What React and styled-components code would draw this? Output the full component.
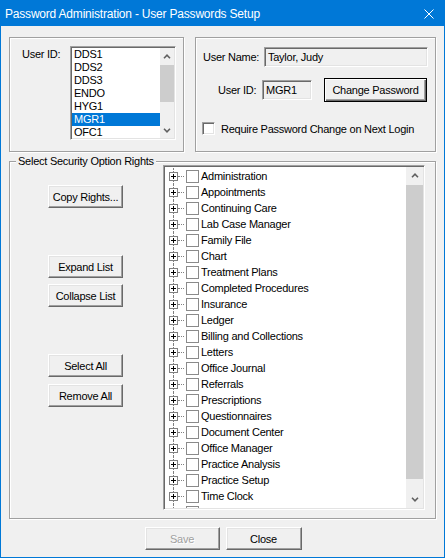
import styled, { createGlobalStyle } from "styled-components";

const users = ["DDS1", "DDS2", "DDS3", "ENDO", "HYG1", "MGR1", "OFC1", "OFC2"];

const rights = [
  "Administration",
  "Appointments",
  "Continuing Care",
  "Lab Case Manager",
  "Family File",
  "Chart",
  "Treatment Plans",
  "Completed Procedures",
  "Insurance",
  "Ledger",
  "Billing and Collections",
  "Letters",
  "Office Journal",
  "Referrals",
  "Prescriptions",
  "Questionnaires",
  "Document Center",
  "Office Manager",
  "Practice Analysis",
  "Practice Setup",
  "Time Clock",
  "Health History",
];

const Chevron = ({ down }) => (
  <svg width="8" height="5" viewBox="0 0 8 5">
    <polyline
      points={down ? "1,0.8 4,3.8 7,0.8" : "1,4.2 4,1.2 7,4.2"}
      fill="none"
      stroke="#606060"
      strokeWidth="1.6"
    />
  </svg>
);

const Plus = () => (
  <svg width="9" height="9" viewBox="0 0 9 9">
    <rect x="0.5" y="0.5" width="8" height="8" fill="#fff" stroke="#808080" />
    <path d="M2 4.5h5M4.5 2v5" stroke="#000" />
  </svg>
);

const ScrollBar = ({ width, arrow, thumbTop, thumbHeight }) => (
  <Scroll $w={width}>
    <ArrowCell $h={arrow}>
      <Chevron />
    </ArrowCell>
    <Track>
      <Thumb $top={thumbTop} $h={thumbHeight} />
    </Track>
    <ArrowCell $h={arrow}>
      <Chevron down />
    </ArrowCell>
  </Scroll>
);

const App = () => {
  return (
    <>
      <GlobalStyle />
      <Window>
        <TitleBar>
          <Title>Password Administration - User Passwords Setup</Title>
          <svg width="10" height="10" viewBox="0 0 10 10" style={{ marginRight: 10 }}>
            <path d="M0.5 0.5L9.5 9.5M9.5 0.5L0.5 9.5" stroke="#fff" strokeWidth="1" />
          </svg>
        </TitleBar>

        <Body>
          <TopRow>
            <UserGroup>
              <ListLabel>User ID:</ListLabel>
              <ListBox>
                <Items>
                  {users.map((u) => (
                    <Item key={u} $selected={u === "MGR1"}>
                      {u}
                    </Item>
                  ))}
                </Items>
                <ScrollBar width={14} arrow={16} thumbTop={1} thumbHeight={37} />
              </ListBox>
            </UserGroup>

            <InfoGroup>
              <FieldRow>
                <FieldLabel $w={61}>User Name:</FieldLabel>
                <Field $w={164}>Taylor, Judy</Field>
              </FieldRow>
              <FieldRow $top={11} $indent={15} $h={24}>
                <FieldLabel $w={44}>User ID:</FieldLabel>
                <Field $w={50}>MGR1</Field>
                <Button $w={103} $default style={{ marginLeft: 12 }}>
                  Change Password
                </Button>
              </FieldRow>
              <FieldRow $top={20} $indent={-1} $h={13}>
                <SunkenCheck />
                <CheckText>Require Password Change on Next Login</CheckText>
              </FieldRow>
            </InfoGroup>
          </TopRow>

          <RightsGroup>
            <Legend>Select Security Option Rights</Legend>
            <ButtonColumn>
              <Button $w={75}>Copy Rights...</Button>
              <Button $w={75} $top={47}>Expand List</Button>
              <Button $w={75} $top={6}>Collapse List</Button>
              <Button $w={75} $top={47}>Select All</Button>
              <Button $w={75} $top={7}>Remove All</Button>
            </ButtonColumn>
            <Tree>
              <TreeList>
                {rights.map((r) => (
                  <TreeRow key={r}>
                    <Branch>
                      <Plus />
                    </Branch>
                    <TreeCheck />
                    <TreeText>{r}</TreeText>
                  </TreeRow>
                ))}
              </TreeList>
              <ScrollBar width={17} arrow={17} thumbTop={1} thumbHeight={294} />
            </Tree>
          </RightsGroup>

          <Footer>
            <Button $w={75} disabled>
              Save
            </Button>
            <Button $w={76}>Close</Button>
          </Footer>
        </Body>
      </Window>
    </>
  );
};

// styled components

const GlobalStyle = createGlobalStyle`
  body {
    margin: 0;
    background: #f0f0f0;
    font-family: "Liberation Sans", Arial, sans-serif;
    font-size: 11px;
    letter-spacing: -0.25px;
    color: #000;
  }
`;

const Window = styled.div`
  box-sizing: border-box;
  width: 445px;
  height: 558px;
  border: 1px solid #0078d7;
  background: #f0f0f0;
  display: flex;
  flex-direction: column;
`;

const TitleBar = styled.div`
  height: 25px;
  flex-shrink: 0;
  background: #0078d7;
  display: flex;
  align-items: center;
  justify-content: space-between;
  padding-left: 4px;
`;

const Title = styled.span`
  color: #fff;
  font-size: 12px;
  letter-spacing: -0.2px;
`;

const Body = styled.div`
  display: flex;
  flex-direction: column;
  padding: 11px 8px 0 8px;
`;

const TopRow = styled.div`
  display: flex;
  gap: 11px;
  height: 115px;
`;

const GroupBox = styled.div`
  box-sizing: border-box;
  border: 1px solid #a0a0a0;
  box-shadow: 1px 1px 0 #fff, inset 1px 1px 0 #fff;
`;

const UserGroup = styled(GroupBox)`
  width: 175px;
  display: flex;
  align-items: flex-start;
  padding: 8px 0 0 12px;
`;

const ListLabel = styled.span`
  width: 48px;
  margin-top: 2px;
  line-height: 13px;
`;

const Sunken = styled.div`
  box-sizing: border-box;
  border: 1px solid;
  border-color: #a0a0a0 #fff #fff #a0a0a0;
  box-shadow: inset 1px 1px 0 #696969, inset -1px -1px 0 #e3e3e3;
`;

const ListBox = styled(Sunken)`
  width: 106px;
  height: 94px;
  padding: 1px;
  background: #fff;
  display: flex;
`;

const Items = styled.div`
  flex: 1;
  overflow: hidden;
`;

const Item = styled.div`
  height: 13px;
  line-height: 13px;
  padding-left: 2px;
  background: ${(p) => (p.$selected ? "#0078d7" : "transparent")};
  color: ${(p) => (p.$selected ? "#fff" : "#000")};
`;

const Scroll = styled.div`
  width: ${(p) => p.$w}px;
  flex-shrink: 0;
  background: #f0f0f0;
  display: flex;
  flex-direction: column;
`;

const ArrowCell = styled.div`
  height: ${(p) => p.$h}px;
  flex-shrink: 0;
  display: flex;
  align-items: center;
  justify-content: center;
`;

const Track = styled.div`
  flex: 1;
`;

const Thumb = styled.div`
  margin-top: ${(p) => p.$top}px;
  height: ${(p) => p.$h}px;
  background: #cdcdcd;
`;

const InfoGroup = styled(GroupBox)`
  flex: 1;
  display: flex;
  flex-direction: column;
  padding: 9px 0 0 7px;
`;

const FieldRow = styled.div`
  display: flex;
  align-items: center;
  height: ${(p) => p.$h || 20}px;
  margin-top: ${(p) => p.$top || 0}px;
  margin-left: ${(p) => p.$indent || 0}px;
`;

const FieldLabel = styled.span`
  width: ${(p) => p.$w}px;
  flex-shrink: 0;
`;

const Field = styled(Sunken)`
  width: ${(p) => p.$w}px;
  height: 20px;
  padding-left: 3px;
  line-height: 18px;
  background: #f0f0f0;
  white-space: nowrap;
`;

const Button = styled.button`
  box-sizing: border-box;
  width: ${(p) => p.$w}px;
  height: ${(p) => (p.$default ? 24 : 23)}px;
  margin-top: ${(p) => p.$top || 0}px;
  padding: 0;
  font: inherit;
  letter-spacing: inherit;
  color: #000;
  background: #f0f0f0;
  border: 1px solid;
  border-color: ${(p) => (p.$default ? "#000" : "#fff #696969 #696969 #fff")};
  box-shadow: ${(p) =>
    p.$default
      ? "inset 1px 1px 0 #fff, inset -1px -1px 0 #696969, inset -2px -2px 0 #a0a0a0"
      : "inset -1px -1px 0 #a0a0a0, inset 1px 1px 0 #e3e3e3"};

  &:disabled {
    color: #a0a0a0;
    text-shadow: 1px 1px 0 #fff;
  }
`;

const SunkenCheck = styled(Sunken)`
  width: 13px;
  height: 13px;
  background: #fff;
`;

const CheckText = styled.span`
  margin-left: 6px;
`;

const RightsGroup = styled(GroupBox)`
  position: relative;
  margin-top: 9px;
  height: 358px;
  display: flex;
  padding: 3px 10px 0 0;
`;

const Legend = styled.span`
  position: absolute;
  top: -7px;
  left: 6px;
  padding: 0 2px;
  line-height: 13px;
  background: #f0f0f0;
`;

const ButtonColumn = styled.div`
  width: 153px;
  box-sizing: border-box;
  padding: 20px 0 0 38px;
  display: flex;
  flex-direction: column;
`;

const Tree = styled(Sunken)`
  width: 262px;
  height: 345px;
  padding: 1px;
  background: #fff;
  display: flex;
`;

const TreeList = styled.div`
  flex: 1;
  overflow: hidden;
  padding: 1px 0 0 4px;
`;

const TreeRow = styled.div`
  height: 16px;
  display: flex;
  align-items: center;
  white-space: nowrap;
`;

const Branch = styled.div`
  position: relative;
  width: 17px;
  height: 16px;
  display: flex;
  align-items: center;

  svg {
    position: relative;
    z-index: 1;
  }

  &::before {
    content: "";
    position: absolute;
    left: 4px;
    top: 0;
    bottom: 0;
    border-left: 1px dotted #808080;
  }

  &::after {
    content: "";
    position: absolute;
    left: 9px;
    top: 8px;
    width: 6px;
    border-top: 1px dotted #808080;
  }
`;

const TreeCheck = styled.span`
  box-sizing: border-box;
  width: 13px;
  height: 13px;
  border: 1px solid #8a8a8a;
  background: #fff;
`;

const TreeText = styled.span`
  margin-left: 2px;
`;

const Footer = styled.div`
  display: flex;
  justify-content: center;
  gap: 6px;
  margin-top: 8px;
  padding-left: 1px;
`;

export default App;
